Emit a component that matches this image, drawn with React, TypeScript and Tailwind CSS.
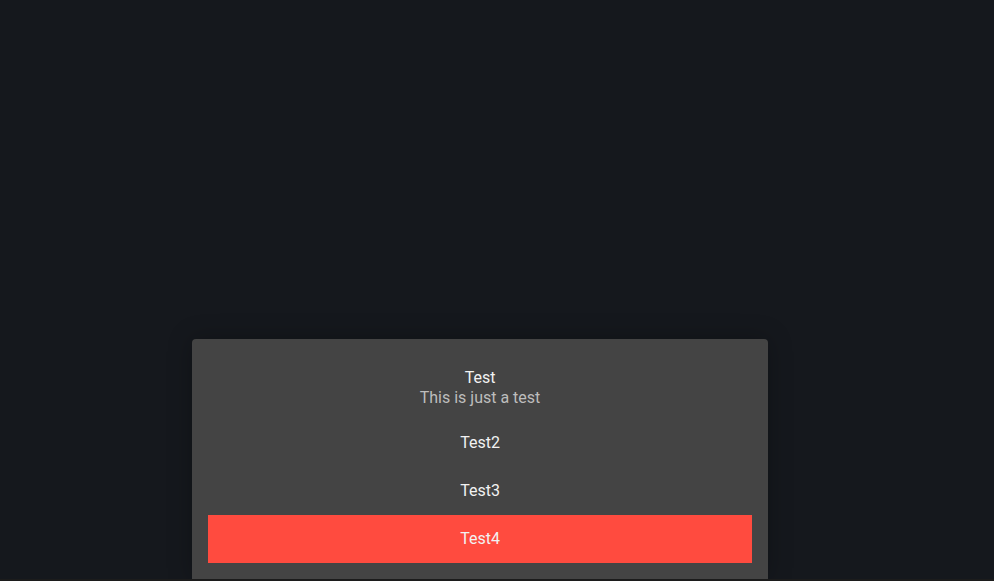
import React from 'react';

const items = [
  { title: 'Test', subtitle: 'This is just a test' },
  { title: 'Test2' },
  { title: 'Test3' },
  { title: 'Test4', active: true },
];

export default function App() {
  return (
    <div
      className="flex h-[581px] w-full flex-col overflow-hidden bg-[#15181d]"
      style={{ fontFamily: 'Roboto, "Liberation Sans", sans-serif' }}
    >
      <div className="flex flex-1 items-end pl-[192px]">
        <div className="w-[576px] rounded-t-[4px] bg-[#444444] p-4 shadow-[0_0_24px_rgba(0,0,0,0.25)]">
          {items.map((item) =>
            item.subtitle ? (
              <div key={item.title} className="flex flex-col items-center pt-[13px] pb-[11px] text-base leading-5">
                <span className="text-[#f2f2f2]">{item.title}</span>
                <span className="text-[#bdbdbd]">{item.subtitle}</span>
              </div>
            ) : (
              <div
                key={item.title}
                className={`flex h-12 items-center justify-center text-base text-[#f2f2f2] ${
                  item.active ? 'bg-[#ff4b3f]' : ''
                }`}
              >
                {item.title}
              </div>
            )
          )}
        </div>
      </div>
      <div className="h-[2px] bg-[#1c1c1c]" />
    </div>
  );
}
